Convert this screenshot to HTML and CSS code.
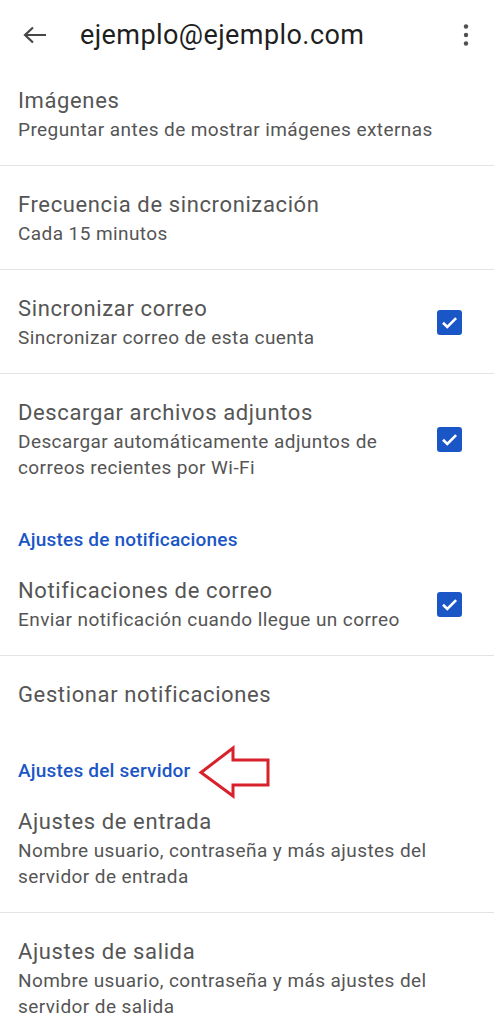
FILE: index.html
```html
<!DOCTYPE html>
<html lang="es">
<head>
<meta charset="utf-8">
<link rel="stylesheet" href="styles.css">
</head>
<body>
<header class="appbar">
  <svg class="back" width="26" height="20" viewBox="0 0 26 20"><path d="M24 10H3M11 2.5L3 10l8 7.5" fill="none" stroke="#474747" stroke-width="2.2"/></svg>
  <h1 class="appbar-title">ejemplo@ejemplo.com</h1>
  <svg class="more" width="8" height="24" viewBox="0 0 8 24"><circle cx="4" cy="3.5" r="2.2" fill="#505050"/><circle cx="4" cy="12" r="2.2" fill="#505050"/><circle cx="4" cy="20.5" r="2.2" fill="#505050"/></svg>
</header>
<main class="list">
  <div class="item divided">
    <div class="text"><div class="title">Imágenes</div><div class="sub">Preguntar antes de mostrar imágenes externas</div></div>
  </div>
  <div class="item divided">
    <div class="text"><div class="title">Frecuencia de sincronización</div><div class="sub">Cada 15 minutos</div></div>
  </div>
  <div class="item divided">
    <div class="text"><div class="title">Sincronizar correo</div><div class="sub">Sincronizar correo de esta cuenta</div></div>
    <span class="check"><svg width="25" height="25" viewBox="0 0 25 25"><rect width="25" height="25" rx="3" fill="#1b56c6"/><path d="M6 12.8l4.3 4.2 8.8-8.8" fill="none" stroke="#fff" stroke-width="2.6"/></svg></span>
  </div>
  <div class="item">
    <div class="text"><div class="title">Descargar archivos adjuntos</div><div class="sub">Descargar automáticamente adjuntos de correos recientes por Wi-Fi</div></div>
    <span class="check"><svg width="25" height="25" viewBox="0 0 25 25"><rect width="25" height="25" rx="3" fill="#1b56c6"/><path d="M6 12.8l4.3 4.2 8.8-8.8" fill="none" stroke="#fff" stroke-width="2.6"/></svg></span>
  </div>
  <div class="section">Ajustes de notificaciones</div>
  <div class="item divided">
    <div class="text"><div class="title">Notificaciones de correo</div><div class="sub">Enviar notificación cuando llegue un correo</div></div>
    <span class="check"><svg width="25" height="25" viewBox="0 0 25 25"><rect width="25" height="25" rx="3" fill="#1b56c6"/><path d="M6 12.8l4.3 4.2 8.8-8.8" fill="none" stroke="#fff" stroke-width="2.6"/></svg></span>
  </div>
  <div class="item single">
    <div class="text"><div class="title">Gestionar notificaciones</div></div>
  </div>
  <div class="section">Ajustes del servidor
    <svg class="pointer" width="74" height="54" viewBox="0 0 74 54"><path d="M3 27.5L35 3v12h35v25H35v11z" fill="none" stroke="#d9212b" stroke-width="3"/></svg>
  </div>
  <div class="item divided">
    <div class="text"><div class="title">Ajustes de entrada</div><div class="sub">Nombre usuario, contraseña y más ajustes del servidor de entrada</div></div>
  </div>
  <div class="item">
    <div class="text"><div class="title">Ajustes de salida</div><div class="sub">Nombre usuario, contraseña y más ajustes del servidor de salida</div></div>
  </div>
</main>
</body>
</html>
```
FILE: styles.css
```css
html, body {
  margin: 0;
  padding: 0;
  background: #ffffff;
}
body {
  font-family: Roboto, "Noto Sans", "Liberation Sans", sans-serif;
  color: #575757;
  width: 494px;
  overflow: hidden;
}
.appbar {
  box-sizing: border-box;
  height: 70px;
  padding: 0 24px 0 22px;
  display: flex;
  align-items: center;
}
.back {
  flex: none;
}
.appbar-title {
  margin: 0 0 0 32px;
  flex: 1;
  font-size: 27px;
  font-weight: 400;
  color: #1f1f1f;
  letter-spacing: 0.42px;
}
.more {
  flex: none;
}
.list {
  margin-top: -8px;
}
.item {
  display: flex;
  align-items: center;
  padding: 24px 32px 22px 18px;
}
.item.divided {
  border-bottom: 1px solid #e3e3e3;
}
.item.single {
  padding-top: 24px;
  padding-bottom: 24px;
}
.text {
  flex: 1;
  min-width: 0;
}
.title {
  font-size: 22px;
  line-height: 30px;
  letter-spacing: 0.62px;
  color: #555555;
}
.sub {
  margin-top: 1px;
  font-size: 19px;
  line-height: 26px;
  letter-spacing: 0.42px;
  color: #555555;
}
.check {
  flex: none;
  display: flex;
  margin-left: 12px;
}
.section {
  position: relative;
  padding: 25px 18px 0;
  font-size: 19px;
  line-height: 24px;
  font-weight: 500;
  letter-spacing: 0.2px;
  color: #1b56c6;
}
.pointer {
  position: absolute;
  left: 198px;
  top: 11px;
}
```
